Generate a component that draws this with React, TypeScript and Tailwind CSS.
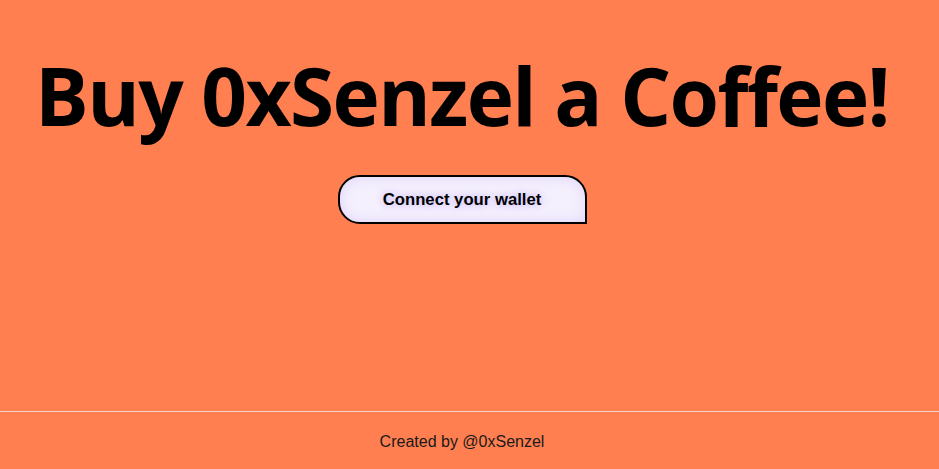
export default function App() {
  return (
    <div className="flex min-h-[469px] flex-col bg-[#ff7f50] pr-[15px]">
      <main className="flex flex-1 flex-col items-center">
        <h1 className="mt-[47px] text-[80px] font-bold leading-[1.2] text-black [font-family:'Open_Sans',sans-serif] tracking-[-1.6px]">
          Buy 0xSenzel a Coffee!
        </h1>
        <button className="mt-[32px] h-[49px] w-[249px] rounded-[22px] rounded-br-none border-2 border-black bg-[#f5f0fd] text-[16.7px] font-bold text-black shadow-[inset_0_0_14px_#ddd3fb] [font-family:'Liberation_Sans',Arial,sans-serif] [text-shadow:0_0_8px_#b6a3f7]">
          Connect your wallet
        </button>
      </main>
      <footer className="-mr-[15px] flex h-[58px] items-center justify-center border-t border-[#f3d3c6] pt-[3px] pr-[15px] text-[16px] text-[#1a1a1a] [font-family:'Liberation_Sans',Arial,sans-serif]">
        Created by @0xSenzel
      </footer>
    </div>
  );
}
